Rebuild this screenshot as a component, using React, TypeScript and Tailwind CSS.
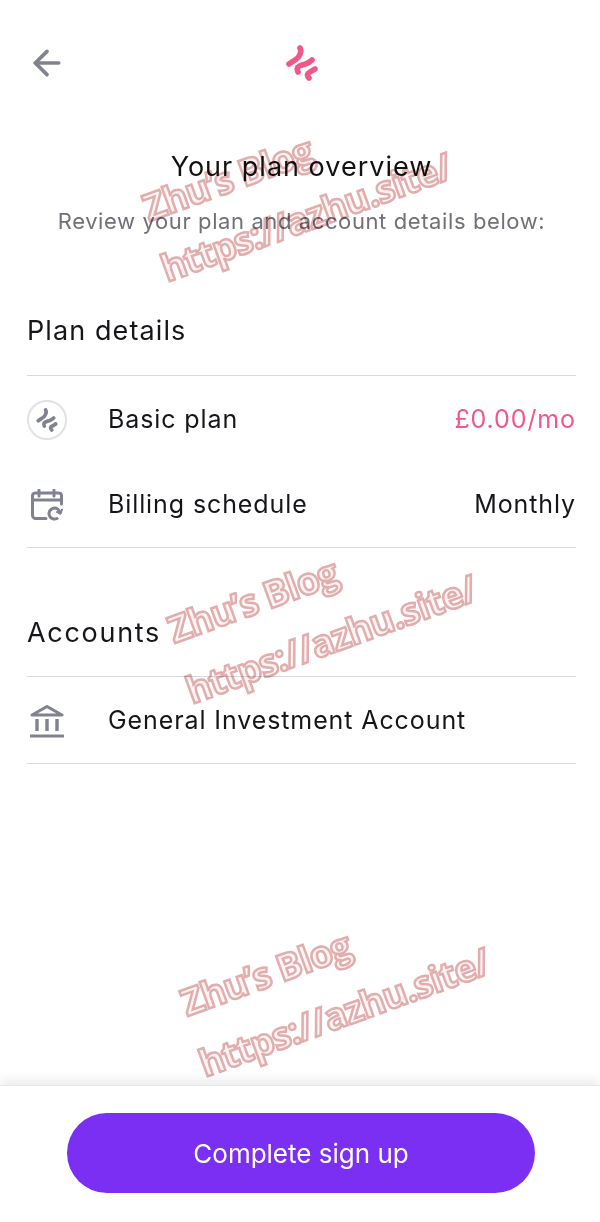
import { ArrowLeft } from 'lucide-react';

function Wave({ className }: { className: string }) {
  return (
    <svg viewBox="0 0 32 36" className={className} fill="none" stroke="currentColor" strokeLinecap="round" strokeWidth="5.6">
      <path d="M3 19 C7 16 13 14 14 9 C15 7 15 5 14 3" />
      <path d="M12 27 C10 23 12 21 16 20 C20 19 23 18 26 15" />
      <path d="M23 33 C20 30 22 28 24 27 C26 26 27 25 29 24" />
    </svg>
  );
}

function CalendarIcon() {
  return (
    <svg viewBox="0 0 32 32" className="ml-1 w-8 h-8 text-[#81828f]" fill="none" stroke="currentColor" strokeWidth="3" strokeLinecap="round" strokeLinejoin="round">
      <path d="M15 29.5 H4.5 C3 29.5 1.5 28 1.5 26 V6.5 C1.5 5 3 4 4.5 4 H27 C29 4 30.5 5 30.5 6.5 V15" />
      <path d="M1.5 11 H30.5" />
      <path d="M8 1 V7 M23 1 V7" />
      <path d="M29 24 A5.5 5.5 0 1 0 26 29.5" />
      <path d="M31 20.5 L29.5 24.5 L26 23" strokeWidth="2" />
    </svg>
  );
}

function BankIcon() {
  return (
    <svg viewBox="0 0 34 34" className="ml-[3px] w-[34px] h-[34px] text-[#81828f]" fill="none" stroke="currentColor" strokeWidth="3" strokeLinecap="butt" strokeLinejoin="round">
      <path d="M2 11 L17 2.5 L32 11 Z" />
      <path d="M7 15 V27 M17 15 V27 M27 15 V27" strokeWidth="3.4" />
      <path d="M0 32 H34" strokeWidth="3" />
    </svg>
  );
}

function Watermark({ className }: { className: string }) {
  return (
    <div className={`absolute -rotate-[20deg] pointer-events-none mix-blend-multiply font-['Open_Sans',sans-serif] font-bold text-[37px] leading-none tracking-[-0.9px] text-[#fdf4f4] [-webkit-text-stroke:2.5px_#e2adad] ${className}`}>
      <div>Zhu’s Blog</div>
      <div className="mt-[26px] ml-[-4px]">https://azhu.site/</div>
    </div>
  );
}

function Row({ icon, label, right }: { icon: React.ReactNode; label: string; right?: React.ReactNode }) {
  return (
    <div className="flex items-center h-[85px]">
      <div className="w-[81px] shrink-0 flex items-center">{icon}</div>
      <span className="text-[25px] text-[#16161a] tracking-[0.9px]">{label}</span>
      {right}
    </div>
  );
}

export default function App() {
  return (
    <div className="relative w-[600px] h-[1222px] overflow-hidden bg-white flex flex-col font-['Inter',sans-serif]">
      <div className="flex-1 pl-[27px] pr-[24px]">
        <div className="relative h-[126px] flex items-center justify-center">
          <ArrowLeft className="absolute left-0 w-10 h-10 text-[#81828f]" strokeWidth={2.2} />
          <Wave className="w-8 h-9 text-[#f2578a]" />
        </div>
        <h1 className="text-[27px] leading-[36px] mt-[23px] text-center text-[#111] tracking-[1px]">Your plan overview</h1>
        <p className="text-[22px] leading-[30px] mt-[21px] text-center text-[#6f7079] tracking-[0.6px]">Review your plan and account details below:</p>

        <h2 className="text-[27px] leading-[36px] mt-[77px] text-[#16161a] tracking-[1.1px]">Plan details</h2>
        <div className="mt-[26px] pt-px border-y border-[#d9d9dd]">
          <Row
            icon={
              <div className="w-10 h-10 rounded-full border-2 border-[#e1e1e6] flex items-center justify-center">
                <Wave className="w-6 h-6 text-[#81828f]" />
              </div>
            }
            label="Basic plan"
            right={<span className="ml-auto text-[25px] text-[#f2578a] tracking-[0.9px]">£0.00/mo</span>}
          />
          <Row
            icon={<CalendarIcon />}
            label="Billing schedule"
            right={<span className="ml-auto text-[25px] text-[#16161a] tracking-[0.9px]">Monthly</span>}
          />
        </div>

        <h2 className="text-[27px] leading-[36px] mt-[67px] text-[#16161a] tracking-[1.7px]">Accounts</h2>
        <div className="mt-[25px] pt-px border-y border-[#d9d9dd]">
          <Row icon={<BankIcon />} label="General Investment Account" />
        </div>
      </div>

      <div className="h-[137px] border-t border-[#e6e6e6] shadow-[0_-6px_10px_rgba(0,0,0,0.07)] flex items-start justify-center pt-[27px] pl-[2px] bg-white">
        <button className="w-[468px] h-20 rounded-full bg-[#7b2ff2] text-white text-[26px]">Complete sign up</button>
      </div>

      <Watermark className="left-[146px] top-[136px]" />
      <Watermark className="left-[171px] top-[558px]" />
      <Watermark className="left-[184px] top-[931px]" />
    </div>
  );
}
